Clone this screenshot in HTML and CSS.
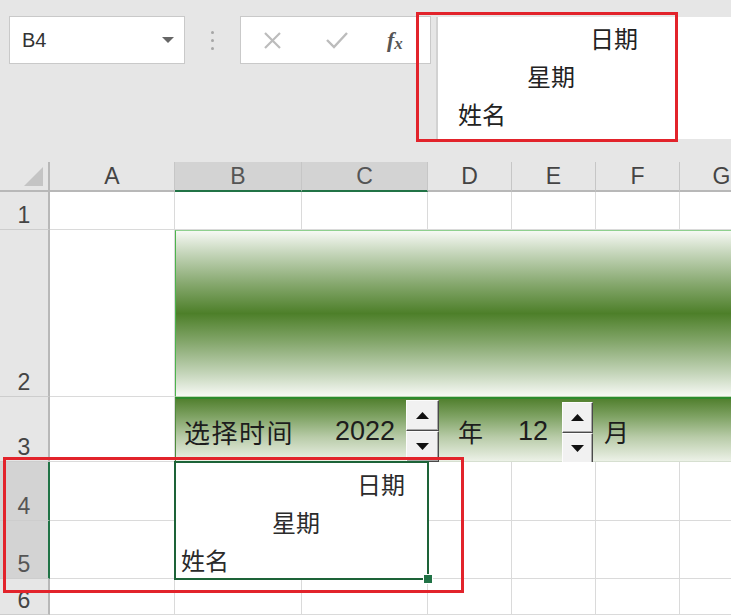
FILE: index.html
```html
<!DOCTYPE html>
<html lang="zh">
<head>
<meta charset="utf-8">
<link rel="stylesheet" href="styles.css">
</head>
<body>
<div class="app">
  <div class="ribbon">
    <div class="namebox">
      <span>B4</span>
      <svg width="12" height="6" viewBox="0 0 12 6"><polygon points="0,0 12,0 6,6" fill="#666"/></svg>
    </div>
    <div class="grip"><i></i><i></i><i></i></div>
    <div class="fxbox">
      <svg class="ic-x" width="19" height="19" viewBox="0 0 19 19"><path d="M2 2 L17 17 M17 2 L2 17" stroke="#bcbcbc" stroke-width="2.2" fill="none"/></svg>
      <svg class="ic-ok" width="24" height="18" viewBox="0 0 24 18"><path d="M2 9 L9 16 L22 2" stroke="#bcbcbc" stroke-width="2.4" fill="none"/></svg>
      <span class="fx">f<sub>x</sub></span>
    </div>
    <div class="formula">
      <div class="fl fl1">日期</div>
      <div class="fl fl2">星期</div>
      <div class="fl fl3">姓名</div>
    </div>
  </div>

  <div class="sheet">
    <div class="corner"><svg width="19" height="19" viewBox="0 0 19 19"><polygon points="19,0 19,19 0,19" fill="#c4c4c4"/></svg></div>
    <div class="ch">A</div>
    <div class="ch sel">B</div>
    <div class="ch sel">C</div>
    <div class="ch">D</div>
    <div class="ch">E</div>
    <div class="ch">F</div>
    <div class="ch">G</div>

    <div class="rh">1</div>
    <div class="c"></div><div class="c"></div><div class="c"></div><div class="c"></div><div class="c"></div><div class="c"></div><div class="c"></div>

    <div class="rh">2</div>
    <div class="c"></div>
    <div class="band"></div>

    <div class="rh">3</div>
    <div class="c"></div>
    <div class="ctrl">
      <span class="lbl">选择时间</span>
      <span class="num n1">2022</span>
      <span class="spin s1"><b><svg width="13" height="7" viewBox="0 0 13 7"><polygon points="6.5,0 13,7 0,7" fill="#111"/></svg></b><b><svg width="13" height="7" viewBox="0 0 13 7"><polygon points="0,0 13,0 6.5,7" fill="#111"/></svg></b></span>
      <span class="unit u1">年</span>
      <span class="num n2">12</span>
      <span class="spin s2"><b><svg width="13" height="7" viewBox="0 0 13 7"><polygon points="6.5,0 13,7 0,7" fill="#111"/></svg></b><b><svg width="13" height="7" viewBox="0 0 13 7"><polygon points="0,0 13,0 6.5,7" fill="#111"/></svg></b></span>
      <span class="unit u2">月</span>
    </div>

    <div class="rh sel">4</div>
    <div class="c"></div>
    <div class="range">
      <div class="rl rl1">日期</div>
      <div class="rl rl2">星期</div>
      <div class="rl rl3">姓名</div>
    </div>
    <div class="c"></div><div class="c"></div><div class="c"></div><div class="c"></div>

    <div class="rh sel">5</div>
    <div class="c"></div>
    <div class="c"></div><div class="c"></div><div class="c"></div><div class="c"></div>

    <div class="rh">6</div>
    <div class="c"></div><div class="c"></div><div class="c"></div><div class="c"></div><div class="c"></div><div class="c"></div><div class="c"></div>
  </div>

  <div class="mark m1"></div>
  <div class="mark m2"></div>
</div>
</body>
</html>
```

FILE: styles.css
```css
* { box-sizing: border-box; margin: 0; padding: 0; }
html, body { width: 731px; height: 615px; overflow: hidden; background: #e6e6e6; }
body { font-family: "Noto Sans CJK SC", "Noto Sans", sans-serif; }

.app { position: relative; width: 731px; height: 615px; overflow: hidden; }

/* ribbon / formula bar */
.ribbon { height: 162px; display: flex; align-items: flex-start; padding-top: 16px; background: #e6e6e6; }
.namebox { margin-left: 9px; width: 176px; height: 48px; background: #fff; border: 1px solid #c9c9c9; display: flex; align-items: center; justify-content: space-between; padding: 0 10px 0 12px; font: 20px "Liberation Sans", sans-serif; color: #333; }
.grip { width: 55px; height: 48px; display: flex; flex-direction: column; align-items: center; justify-content: center; gap: 5px; }
.grip i { width: 3px; height: 3px; background: #a6a6a6; border-radius: 50%; }
.fxbox { width: 191px; height: 48px; background: #fff; border: 1px solid #c9c9c9; display: flex; align-items: center; padding-left: 22px; }
.ic-ok { margin-left: 43px; }
.fx { margin-left: 38px; font: italic bold 22px "Liberation Serif", serif; color: #555; line-height: 1; }
.fx sub { font-size: 17px; vertical-align: -2px; }
.formula { margin-left: 5px; flex: 1; height: 122px; margin-top: 1px; background: #fff; border-left: 2px solid #d2d2d2; padding-top: 2px; font-size: 24px; line-height: 38px; color: #222; }
.fl1 { padding-left: 152px; }
.fl2 { padding-left: 89px; }
.fl3 { padding-left: 20px; }

/* sheet */
.sheet { width: 764px; display: grid; grid-template-columns: 50px 125px 127px 126px 84px 84px 84px 84px; grid-template-rows: 30px 38px 167px 65px 59px 58px 36px; background: #fff; }
.corner { background: #e6e6e6; border-right: 2px solid #b8b8b8; border-bottom: 2px solid #b8b8b8; display: flex; align-items: flex-end; justify-content: flex-end; padding: 0 5px 4px 0; }
.ch { background: #e6e6e6; border-right: 1px solid #c6c6c6; border-bottom: 2px solid #b8b8b8; display: flex; align-items: center; justify-content: center; font: 23px "Liberation Sans", sans-serif; color: #444; }
.ch.sel { background: #d3d3d3; border-bottom-color: #217346; color: #555; }
.rh { background: #e6e6e6; border-right: 2px solid #b8b8b8; border-bottom: 1px solid #cdcdcd; display: flex; align-items: flex-end; justify-content: center; padding-bottom: 2px; font: 23px/1 "Liberation Sans", sans-serif; color: #444; }
.rh.sel { background: #d3d3d3; border-right-color: #217346; color: #555; }
.c { background: #fff; border-right: 1px solid #dadada; border-bottom: 1px solid #dadada; }

.band { grid-column: span 6; border-top: 1px solid #8fd08f; border-left: 1px solid #4cb34c; border-bottom: 1px solid #bcd9b5;
  background: linear-gradient(to bottom, #f6f9f4 0%, #c3d4b8 14%, #86a86e 32%, #4d7f29 50%, #86a86e 68%, #c3d4b8 86%, #f6f9f4 100%); }

.ctrl { grid-column: span 6; border-top: 2px solid #2c8a2c; border-left: 1px solid #4d8a3a; border-bottom: 1px solid #d6dfd0;
  background: linear-gradient(to bottom, #52802f 0%, #7ea263 28%, #b9cca9 62%, #ecf1e7 100%);
  display: flex; align-items: center; color: #1d1d1d; }
.lbl { width: 159px; padding-left: 8px; padding-top: 2px; font-size: 26px; letter-spacing: 1.5px; }
.num { font: 27px "Liberation Sans", sans-serif; padding-top: 2px; }
.n1 { width: 71px; }
.n2 { width: 44px; }
.unit { font-size: 25px; padding-top: 2px; }
.u1 { margin-left: 19px; width: 60px; }
.u2 { margin-left: 11px; }
.spin { align-self: flex-start; display: flex; flex-direction: column; height: 62px; }
.s1 { width: 33px; margin-top: 1px; }
.s2 { width: 31px; margin-top: 3px; }
.spin b { flex: 1; display: flex; align-items: center; justify-content: center; background: #f1f1f1; border: 1px solid; border-color: #fcfcfc #4a4a4a #4a4a4a #fcfcfc; box-shadow: inset -1px -1px 0 #a8a8a8; }

.range { grid-column: span 2; grid-row: span 2; position: relative; background: #fff; outline: 2px solid #1d6338; outline-offset: -1px; padding-top: 3px; font-size: 24px; line-height: 38px; color: #2b2b2b; }
.range::after { content: ""; position: absolute; right: -5px; bottom: -5px; width: 8px; height: 8px; background: #217346; border: 1px solid #fff; }
.rl1 { padding-left: 182px; }
.rl2 { padding-left: 97px; }
.rl3 { padding-left: 6px; }

/* annotation boxes */
.mark { position: absolute; border: 3px solid #e2232b; }
.m1 { left: 416px; top: 12px; width: 262px; height: 130px; }
.m2 { left: 3px; top: 457px; width: 461px; height: 136px; }
```
